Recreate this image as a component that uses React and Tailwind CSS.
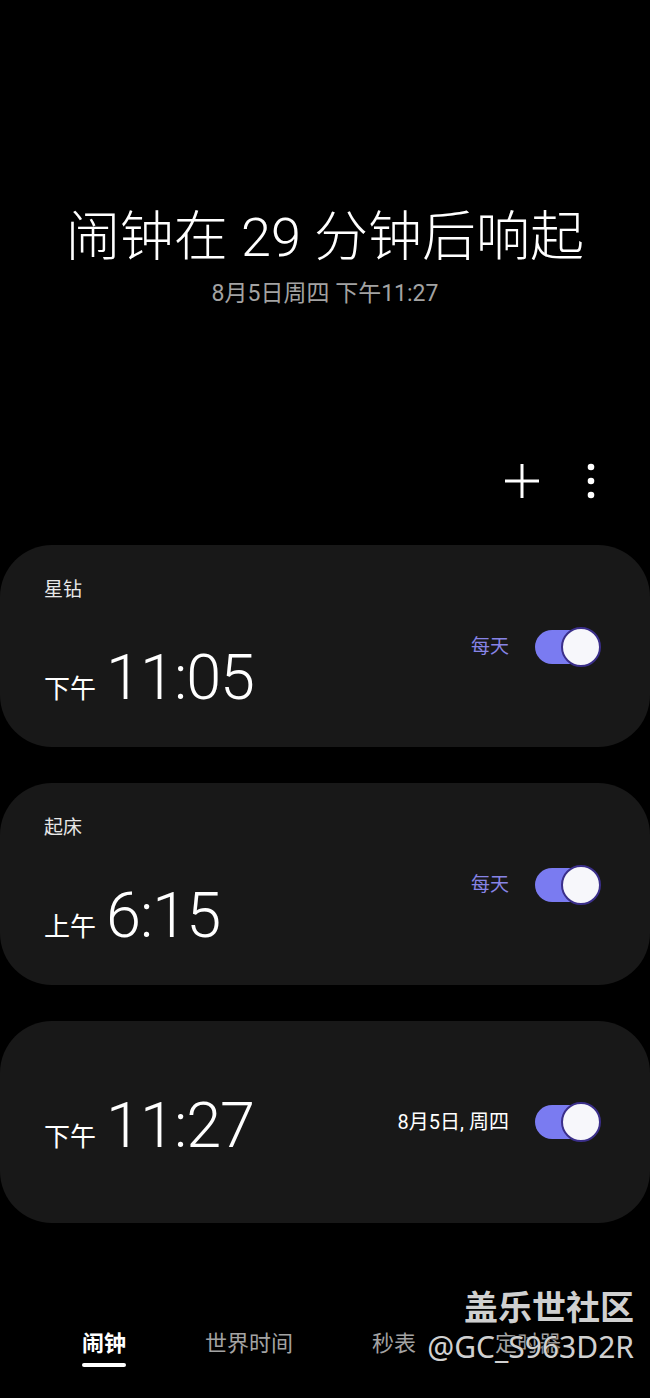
import { useState } from "react";

const FONT = "font-['Roboto','Noto_Sans_CJK_SC',sans-serif]";

function Toggle({ on, setOn }) {
  return (
    <button
      onClick={() => setOn(!on)}
      className="relative w-[66px] h-[40px] flex items-center"
    >
      <span className="block w-[58px] h-[34px] rounded-full bg-[#7a7bf1]" />
      <span className="absolute right-0 top-0 w-[40px] h-[40px] rounded-full bg-[#f7f7fb] border-2 border-[#3b2f8a]" />
    </button>
  );
}

function Time({ period, time }) {
  return (
    <div className="flex items-end">
      <span className="text-[26px] leading-none text-white mb-[1px]">
        {period}
      </span>
      <span className="ml-[10px] text-[63px] leading-[50px] font-light text-white tracking-[-1px]">
        {time}
      </span>
    </div>
  );
}

function AlarmCard({ label, period, time, repeat, repeatClass }) {
  const [on, setOn] = useState(true);

  if (!label) {
    return (
      <div className="h-[202px] rounded-[52px] bg-[#181818] flex items-center justify-between pl-[44px] pr-[49px]">
        <div className="mt-[8px]">
          <Time period={period} time={time} />
        </div>
        <div className="flex items-center gap-[26px]">
          <span className={repeatClass}>{repeat}</span>
          <Toggle on={on} setOn={setOn} />
        </div>
      </div>
    );
  }

  return (
    <div className="h-[202px] rounded-[52px] bg-[#181818] flex flex-col pl-[44px] pr-[49px]">
      <div className="h-[56px] pt-[35px] text-[19px] leading-none text-[#e8e8e8]">
        {label}
      </div>
      <div className="flex items-center justify-between">
        <div className="mt-[52px]">
          <Time period={period} time={time} />
        </div>
        <div className="flex items-center gap-[26px] -mt-[10px]">
          <span className={repeatClass}>{repeat}</span>
          <Toggle on={on} setOn={setOn} />
        </div>
      </div>
    </div>
  );
}

export default function App() {
  const tabs = ["闹钟", "世界时间", "秒表", "定时器"];

  return (
    <div className={`relative w-[650px] h-[1398px] bg-black overflow-hidden ${FONT}`}>

      <div className="pt-[205px] text-center">
        <h1 className="text-[54px] leading-[66px] font-light text-white">
          闹钟在 29 分钟后响起
        </h1>
        <p className="mt-[11px] text-[23px] leading-none text-[#a3a3a3]">
          8月5日周四 下午11:27
        </p>
      </div>

      <div className="mt-[158px] flex justify-end items-center gap-[46px] pr-[54px] h-[36px]">
        <svg width="36" height="36" viewBox="0 0 36 36">
          <path d="M18 1v34M1 18h34" stroke="white" strokeWidth="3" />
        </svg>
        <svg width="10" height="36" viewBox="0 0 10 36">
          <circle cx="5" cy="4" r="3.3" fill="white" />
          <circle cx="5" cy="18" r="3.3" fill="white" />
          <circle cx="5" cy="32" r="3.3" fill="white" />
        </svg>
      </div>

      <div className="mt-[46px] flex flex-col gap-[36px]">
        <AlarmCard
          label="星钻"
          period="下午"
          time="11:05"
          repeat="每天"
          repeatClass="text-[19px] text-[#8784e6]"
        />
        <AlarmCard
          label="起床"
          period="上午"
          time="6:15"
          repeat="每天"
          repeatClass="text-[19px] text-[#8784e6]"
        />
        <AlarmCard
          label=""
          period="下午"
          time="11:27"
          repeat="8月5日, 周四"
          repeatClass="text-[20px] text-white"
        />
      </div>

      <div className="absolute left-0 right-0 top-[1328px] flex">
        {tabs.map((t, i) => (
          <div
            key={t}
            className={
              i === 0
                ? "ml-[82px] flex flex-col items-center"
                : "ml-[79px] flex flex-col items-center"
            }
          >
            <span
              className={
                i === 0
                  ? "text-[22px] leading-[32px] font-bold text-white"
                  : "text-[22px] leading-[32px] text-[#a3a3a3]"
              }
            >
              {t}
            </span>
            {i === 0 && (
              <span className="mt-[3px] w-[44px] h-[4px] rounded-full bg-white" />
            )}
          </div>
        ))}
      </div>

      <div className="absolute right-[16px] top-[1287px] flex flex-col items-end text-[#d0d0d0] [text-shadow:0_0_2px_#000,0_0_2px_#000]">
        <span className="text-[34px] leading-[42px] font-bold">盖乐世社区</span>
        <span className="text-[30px] leading-[36px] font-['Noto_Sans','Roboto',sans-serif]">
          @GC_S963D2R
        </span>
      </div>

    </div>
  );
}
